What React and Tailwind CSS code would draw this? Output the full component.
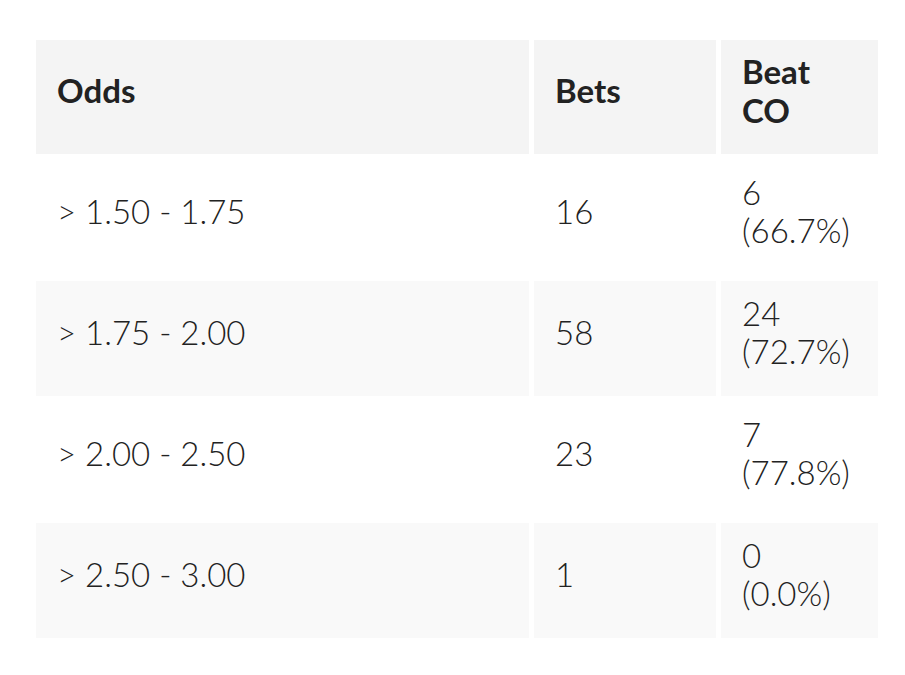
import React from 'react';

const rows = [
    { odds: '> 1.50 - 1.75', bets: '16', beat: '6', pct: '(66.7%)' },
    { odds: '> 1.75 - 2.00', bets: '58', beat: '24', pct: '(72.7%)' },
    { odds: '> 2.00 - 2.50', bets: '23', beat: '7', pct: '(77.8%)' },
    { odds: '> 2.50 - 3.00', bets: '1', beat: '0', pct: '(0.0%)' },
];

export default function App() {
    return (
        <div className="w-[905px] h-[675px] bg-white pt-[40px] pl-[36px] text-[#222] font-['Lato','Noto_Sans',sans-serif] text-[33px] leading-[38.5px]">
            <div className="grid grid-cols-[493px_182px_157px] gap-x-[5px] gap-y-[6px]">
                {/* header */}
                <div className="h-[114px] bg-[#f4f4f4] pl-[21px] pb-[13px] flex items-center font-bold">Odds</div>
                <div className="h-[114px] bg-[#f4f4f4] pl-[21px] pb-[13px] flex items-center font-bold">Bets</div>
                <div className="h-[114px] bg-[#f4f4f4] pl-[21px] pb-[13px] flex flex-col justify-center font-bold">
                    <span>Beat</span>
                    <span>CO</span>
                </div>

                {rows.map((r, i) => {
                    const bg = i % 2 === 1 ? 'bg-[#f9f9f9]' : 'bg-white';
                    return (
                        <React.Fragment key={r.odds}>
                            <div className={`h-[115px] ${bg} pl-[21px] pb-[13px] flex items-center font-light`}>{r.odds}</div>
                            <div className={`h-[115px] ${bg} pl-[21px] pb-[13px] flex items-center font-light`}>{r.bets}</div>
                            <div className={`h-[115px] ${bg} pl-[21px] pb-[13px] flex flex-col justify-center font-light`}>
                                <span>{r.beat}</span>
                                <span>{r.pct}</span>
                            </div>
                        </React.Fragment>
                    );
                })}
            </div>
        </div>
    );
}
